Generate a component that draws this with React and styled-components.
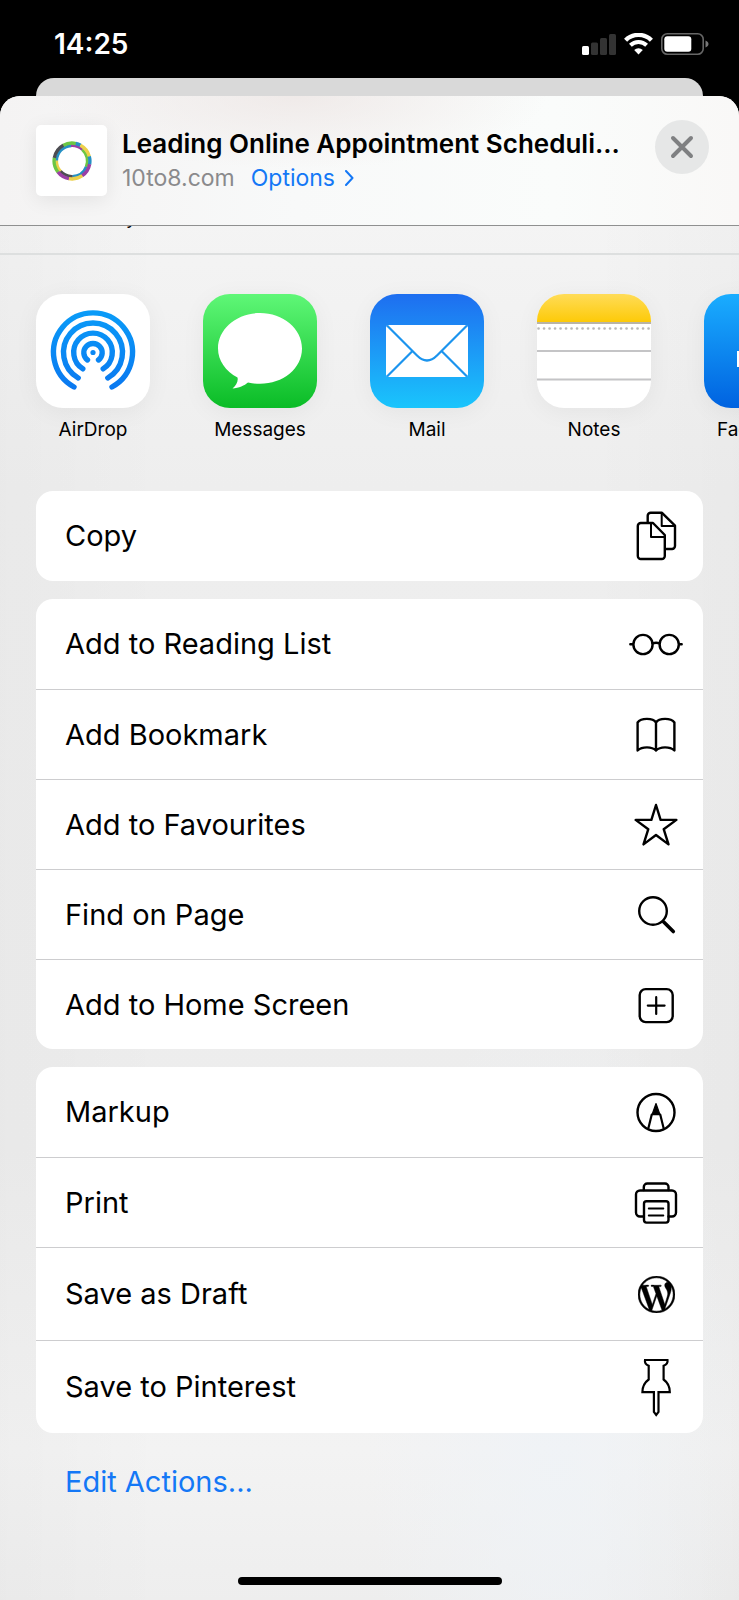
import React from 'react'
import styled, { createGlobalStyle } from 'styled-components'
import { SiWordpress } from 'react-icons/si'

const GlobalStyle = createGlobalStyle`
  * {
    box-sizing: border-box;
  }

  body {
    margin: 0;
    background: #000;
    color: #000;
    font-family: Inter, 'Liberation Sans', sans-serif;
  }

  button {
    appearance: none;
    border: none;
    margin: 0;
    padding: 0;
    background: none;
    color: inherit;
    font: inherit;
    cursor: pointer;
  }
`

const Screen = styled.div`
  display: flex;
  flex-direction: column;
  min-height: 100vh;
  overflow: hidden;
`

/**
 * Status bar
 */

const StatusBar = styled.div`
  display: flex;
  align-items: center;
  justify-content: space-between;
  height: 78px;
  padding: 10px 30px 0 54px;
  color: #fff;
`

const Time = styled.time`
  font-size: 28px;
  line-height: 32px;
  font-weight: 600;
`

const StatusIcons = styled.div`
  display: flex;
  align-items: center;
  gap: 8px;
`

const Signal = () => (
  <svg width="34" height="22" viewBox="0 0 34 22" aria-label="Signal">
    <rect x="0" y="13" width="7" height="9" rx="1.5" fill="#fff" />
    <rect x="9" y="9.5" width="7" height="12.5" rx="1.5" fill="#333" />
    <rect x="18" y="5" width="7" height="17" rx="1.5" fill="#333" />
    <rect x="27" y="1" width="7" height="21" rx="1.5" fill="#333" />
  </svg>
)

const Wifi = () => (
  <svg width="29" height="22" viewBox="0 0 29 22" fill="none" aria-label="Wi-Fi">
    <path d="M1.6 7.2a18.4 18.4 0 0 1 25.8 0" stroke="#fff" strokeWidth="4.4" />
    <path d="M6.4 12.2a11.6 11.6 0 0 1 16.2 0" stroke="#fff" strokeWidth="4" />
    <path d="M10.2 16.9a6.2 6.2 0 0 1 8.6 0L14.5 21.4z" fill="#fff" />
  </svg>
)

const Battery = () => (
  <svg width="48" height="22" viewBox="0 0 48 22" aria-label="Battery">
    <rect x="0.8" y="0.8" width="41.4" height="20.4" rx="5.5" fill="none" stroke="#666" strokeWidth="1.6" />
    <rect x="3.3" y="3.3" width="27" height="15.4" rx="3" fill="#fff" />
    <path d="M44.5 7.5c2 .8 3 2 3 3.500s-1 2.700-3 3.500z" fill="#777" />
  </svg>
)

/**
 * Sheet
 */

const BackSheet = styled.div`
  height: 38px;
  margin: 0 36px -20px;
  border-radius: 18px 18px 0 0;
  background: #d9d9d9;
`

const Sheet = styled.main`
  position: relative;
  flex: 1;
  display: flex;
  flex-direction: column;
  border-radius: 20px 20px 0 0;
  overflow: hidden;
  background:
    radial-gradient(ellipse at 75% 90%, rgba(239, 243, 247, 0.8), rgba(239, 243, 247, 0) 24%),
    linear-gradient(90deg, rgba(0, 0, 0, 0.02), transparent 22%, transparent 80%, rgba(0, 0, 0, 0.02)),
    linear-gradient(#f4f4f4 8%, #eeeeee 26%, #ededed 70%, #f3f3f3 90%, #eeeeee);
`

const Header = styled.header`
  display: flex;
  align-items: flex-start;
  padding: 24px 30px 29px 36px;
  border-bottom: 1px solid #8f9090;
  background:
    radial-gradient(ellipse at 40% 0, rgba(236, 228, 226, 0.7), rgba(236, 228, 226, 0) 40%),
    linear-gradient(90deg, #f4f3f3, #f8f9f9 40%, #fafcfb 75%, #f9f8f7);
`

const Thumb = styled.div`
  display: flex;
  align-items: center;
  justify-content: center;
  flex: none;
  width: 71px;
  height: 71px;
  margin: 5px 15px 0 0;
  border-radius: 5px;
  background: #fff;
  box-shadow: 0 4px 20px rgba(0, 0, 0, 0.08);
`

const HeaderText = styled.div`
  flex: 1;
  min-width: 0;
  padding-top: 7px;
`

const Title = styled.h1`
  margin: 0;
  font-size: 26px;
  line-height: 34px;
  font-weight: 600;
  white-space: nowrap;
`

const Subtitle = styled.div`
  display: flex;
  align-items: center;
  gap: 16px;
  font-size: 23px;
  line-height: 34px;
  color: #8a8a8c;
`

const OptionsButton = styled.button`
  display: flex;
  align-items: center;
  gap: 10px;
  color: #1478f6;
`

const CloseButton = styled.button`
  display: flex;
  align-items: center;
  justify-content: center;
  flex: none;
  width: 54px;
  height: 54px;
  border-radius: 50%;
  background: #e6e7e7;
`

// [start angle, end angle, colour], clockwise from the top
const outerRing = [
  [-30, 12, '#6cc644'],
  [12, 28, '#2590c4'],
  [28, 75, '#ecd04a'],
  [75, 100, '#2590c4'],
  [100, 145, '#9a3fa5'],
  [145, 190, '#ecd04a'],
  [190, 232, '#9a3fa5'],
  [232, 280, '#6cc644'],
  [280, 330, '#4d4d52'],
]

const innerRing = [
  [-5, 42, '#9a3fa5'],
  [42, 112, '#6cc644'],
  [112, 178, '#2590c4'],
  [178, 228, '#4d4d52'],
  [228, 272, '#ecd04a'],
  [272, 355, '#2590c4'],
]

const Ring = ({ radius, width, arcs }) =>
  arcs.map(([start, end, color]) => (
    <circle
      key={start}
      cx="20"
      cy="20"
      r={radius}
      fill="none"
      stroke={color}
      strokeWidth={width}
      pathLength="360"
      strokeDasharray={`${end - start + 1} 360`}
      transform={`rotate(${start - 90} 20 20)`}
    />
  ))

const Logo = () => (
  <svg width="40" height="40" viewBox="0 0 40 40" aria-hidden="true">
    <Ring radius={15.4} width={3} arcs={innerRing} />
    <Ring radius={17.9} width={3.4} arcs={outerRing} />
  </svg>
)

/**
 * People row, scrolled away under the header
 */

const People = styled.div`
  height: 29px;
  padding: 0 126px;
  border-bottom: 2px solid #dddfdf;
`

const PersonName = styled.div`
  display: flex;
  align-items: flex-end;
  height: 2px;
  overflow: hidden;
  font-size: 19px;
  line-height: 20px;
`

/**
 * Apps
 */

const Apps = styled.div`
  display: flex;
  gap: 53px;
  padding: 39px 0 0 36px;
  overflow: hidden;
`

const AppButton = styled.button`
  display: flex;
  flex-direction: column;
  align-items: center;
  flex: none;
  gap: 8px;
  width: 114px;
  font-size: 19px;
  line-height: 28px;
`

const AppTile = styled.span`
  display: block;
  width: 114px;
  height: 114px;
  border-radius: 27px;
  overflow: hidden;
  background: ${(props) => props.$background};
  box-shadow: 0 4px 24px rgba(0, 0, 0, 0.05);

  svg {
    display: block;
  }
`

const AirDropIcon = () => (
  <svg width="114" height="114" viewBox="0 0 114 114" fill="none">
    <defs>
      <linearGradient id="airdrop" gradientUnits="userSpaceOnUse" x1="0" y1="16" x2="0" y2="96">
        <stop offset="0" stopColor="#0a9cf8" />
        <stop offset="1" stopColor="#0a78f0" />
      </linearGradient>
    </defs>
    <g stroke="url(#airdrop)" strokeWidth="5.4" strokeLinecap="round">
      <path d="M38 93A39.500 39.500 0 1 1 76 93" />
      <path d="M42.200 84A29.500 29.500 0 1 1 71.800 84" />
      <path d="M46.800 74.800A19.300 19.300 0 1 1 67.200 74.800" />
      <path d="M51.500 66A9.200 9.200 0 1 1 62.500 66" />
    </g>
    <circle cx="57" cy="58.500" r="2.600" fill="#0a88f4" />
  </svg>
)

const MessagesIcon = () => (
  <svg width="114" height="114" viewBox="0 0 114 114">
    <path
      d="M57 19C34 19 15 34.500 15 54.500c0 12 7.500 22.500 19.500 29 1 4-1.500 8-5 11 6.500-.5 12-3 15.500-6 4 1 8 1.300 12 1.300 23 0 42-15.300 42-35.300S80 19 57 19z"
      fill="#fff"
    />
  </svg>
)

const MailIcon = () => (
  <svg width="114" height="114" viewBox="0 0 114 114">
    <rect x="16" y="31" width="82" height="52" rx="3" fill="#fff" />
    <g fill="none" stroke="#1b94ee" strokeWidth="2.2">
      <path d="M17 31.500L47 61.500c6.500 6.500 13.500 6.500 20 0L97 31.500" />
      <path d="M17 82.500L42.500 57M97 82.500L71.500 57" />
    </g>
  </svg>
)

const NotesIcon = () => (
  <svg width="114" height="114" viewBox="0 0 114 114">
    <defs>
      <linearGradient id="notes" x1="0" y1="0" x2="0" y2="1">
        <stop offset="0" stopColor="#ffdc58" />
        <stop offset="1" stopColor="#fdca08" />
      </linearGradient>
    </defs>
    <rect width="114" height="28" fill="url(#notes)" />
    <path d="M0 29h114" stroke="#b9b4a6" strokeWidth="2" />
    <path d="M1.500 34.500h114" stroke="#b8b8b8" strokeWidth="2.600" strokeLinecap="round" strokeDasharray="0.1 5.400" />
    <path d="M0 57h114M0 85.500h114" stroke="#c4c4c6" strokeWidth="2" />
  </svg>
)

const FacebookIcon = () => (
  <svg width="114" height="114" viewBox="0 0 114 114">
    <path d="M47 114V73H33V57h14V46c0-15 9-23 22-23 6 0 12 1 12 1v14h-7c-7 0-9 4-9 9v10h15l-2.500 16H65v41z" fill="#fff" />
  </svg>
)

const apps = [
  { name: 'AirDrop', icon: AirDropIcon, background: '#fff' },
  { name: 'Messages', icon: MessagesIcon, background: 'linear-gradient(#5ff777, #0abc26)' },
  { name: 'Mail', icon: MailIcon, background: 'linear-gradient(#1e6ef0, #1ac5fc)' },
  { name: 'Notes', icon: NotesIcon, background: '#fff' },
  { name: 'Facebook', icon: FacebookIcon, background: 'linear-gradient(#1aadff, #0062e0)' },
]

/**
 * Actions
 */

const Actions = styled.div`
  display: flex;
  flex-direction: column;
  gap: 18px;
  padding: 47px 36px 0;
`

const Group = styled.div`
  border-radius: 17px;
  overflow: hidden;
  background: #fff;
`

const ActionRow = styled.button`
  display: flex;
  align-items: center;
  justify-content: space-between;
  width: 100%;
  height: ${(props) => (props.$tall ? 93 : 90)}px;
  padding: 0 20px 0 29px;
  font-size: 29px;
  line-height: 36px;
  text-align: left;

  & + & {
    border-top: 1px solid #cdcdcf;
  }
`

const EditButton = styled.button`
  align-self: flex-start;
  margin: 31px 65px 0;
  font-size: 29px;
  line-height: 36px;
  color: #1478f6;
`

const HomeIndicator = styled.div`
  width: 264px;
  height: 8px;
  margin: auto auto 15px;
  border-radius: 4px;
  background: #000;
`

const Glyph = ({ children }) => (
  <svg
    width="54"
    height="60"
    viewBox="0 0 54 60"
    fill="none"
    stroke="#000"
    strokeWidth="2.400"
    strokeLinecap="round"
    strokeLinejoin="round"
    aria-hidden="true"
  >
    {children}
  </svg>
)

const CopyIcon = () => (
  <Glyph>
    <path d="M18.700 16.500V9.800a3 3 0 0 1 3-3H33L46 19.700V40a3 3 0 0 1-3 3H37.500" />
    <path d="M32.700 7.500V20H45.500" strokeWidth="2" />
    <path d="M11.800 17H24L35.800 29V50a3 3 0 0 1-3 3H11.800a3 3 0 0 1-3-3V20a3 3 0 0 1 3-3z" />
    <path d="M22 17.500V31H35.500" strokeWidth="2" />
  </Glyph>
)

const GlassesIcon = () => (
  <Glyph>
    <circle cx="14" cy="30.500" r="9.600" />
    <circle cx="40.200" cy="30.500" r="9.600" />
    <path d="M23.500 29.500q3.600-1.500 7.200 0M1.300 30.200H4M50.200 30.200H52.700" />
  </Glyph>
)

const BookIcon = () => (
  <Glyph>
    <path d="M27 17.500C24 12.700 12 12.700 8.600 17.500V45.500C13 41.300 23 41.300 27 45.500C31 41.300 41 41.300 45.400 45.500V17.500C42 12.700 30 12.700 27 17.500zV45.500" />
  </Glyph>
)

const StarIcon = () => (
  <Glyph>
    <path d="M27 10L31.600 24.900H47.400L34.700 34.200L39.500 49.400L27 40L14.500 49.400L19.300 34.200L6.600 24.900H22.400z" />
  </Glyph>
)

const SearchIcon = () => (
  <Glyph>
    <circle cx="24" cy="26" r="13.800" />
    <path d="M34.500 36.800L44.300 46.600" strokeWidth="3.600" />
  </Glyph>
)

const PlusIcon = () => (
  <Glyph>
    <rect x="10.700" y="14.100" width="33" height="33" rx="6" />
    <path d="M18.800 30.600H35.600M27.200 22.200V39" strokeWidth="2.200" />
  </Glyph>
)

const MarkupIcon = () => (
  <Glyph>
    <circle cx="27" cy="30.500" r="18.500" />
    <path d="M22.700 32.700L19.300 46.600M31.300 32.700L34.700 46.600" strokeWidth="2.200" />
    <path d="M27 21.500L23 32.700H31z" fill="#000" strokeWidth="1.200" />
  </Glyph>
)

const PrintIcon = () => (
  <Glyph>
    <path d="M14.800 17V14a3.500 3.500 0 0 1 3.500-3.500H36a3.500 3.500 0 0 1 3.500 3.500V17" />
    <path d="M14.500 43.500H11a4 4 0 0 1-4-4V21.500a4 4 0 0 1 4-4H43a4 4 0 0 1 4 4V39.500a4 4 0 0 1-4 4H39.500" />
    <rect x="15" y="28.300" width="24.500" height="21.300" rx="2.500" />
    <path d="M19.800 35.500H34.300M19.800 42.500H34.300" strokeWidth="2" />
  </Glyph>
)

const WordpressSlot = styled.span`
  display: flex;
  justify-content: center;
  width: 54px;
`

const WordpressIcon = () => (
  <WordpressSlot>
    <SiWordpress size={37} stroke="currentColor" strokeWidth="0.3" aria-hidden="true" />
  </WordpressSlot>
)

const PinIcon = () => (
  <Glyph>
    <path
      d="M16 3H38.500C39 6 37.500 7.600 34.600 8.800V22.500C38 25 40.800 29 40.800 35.200H29.500V55L27.200 58L24.900 55V35.200H13.400C13.400 29 16.200 25 19.700 22.500V8.800C16.800 7.600 15.500 6 16 3z"
      strokeWidth="2.200"
      strokeLinejoin="miter"
    />
  </Glyph>
)

const groups = [
  [{ label: 'Copy', icon: CopyIcon }],
  [
    { label: 'Add to Reading List', icon: GlassesIcon },
    { label: 'Add Bookmark', icon: BookIcon },
    { label: 'Add to Favourites', icon: StarIcon },
    { label: 'Find on Page', icon: SearchIcon },
    { label: 'Add to Home Screen', icon: PlusIcon },
  ],
  [
    { label: 'Markup', icon: MarkupIcon },
    { label: 'Print', icon: PrintIcon },
    { label: 'Save as Draft', icon: WordpressIcon, tall: true },
    { label: 'Save to Pinterest', icon: PinIcon, tall: true },
  ],
]

const App = () => (
  <Screen>
    <GlobalStyle />
    <StatusBar>
      <Time>14:25</Time>
      <StatusIcons>
        <Signal />
        <Wifi />
        <Battery />
      </StatusIcons>
    </StatusBar>
    <BackSheet />
    <Sheet>
      <Header>
        <Thumb>
          <Logo />
        </Thumb>
        <HeaderText>
          <Title>Leading Online Appointment Scheduli...</Title>
          <Subtitle>
            10to8.com
            <OptionsButton>
              Options
              <svg width="9" height="16" viewBox="0 0 9 16" fill="none" stroke="currentColor" strokeWidth="2">
                <path d="M1 1l6.500 7L1 15" strokeLinecap="round" strokeLinejoin="round" />
              </svg>
            </OptionsButton>
          </Subtitle>
        </HeaderText>
        <CloseButton aria-label="Close">
          <svg width="24" height="24" viewBox="0 0 24 24" stroke="#7f8082" strokeWidth="4" strokeLinecap="round">
            <path d="M3 3l18 18M21 3L3 21" />
          </svg>
        </CloseButton>
      </Header>
      <People>
        <PersonName>y</PersonName>
      </People>
      <Apps>
        {apps.map(({ name, icon: Icon, background }) => (
          <AppButton key={name}>
            <AppTile $background={background}>
              <Icon />
            </AppTile>
            {name}
          </AppButton>
        ))}
      </Apps>
      <Actions>
        {groups.map((actions) => (
          <Group key={actions[0].label}>
            {actions.map(({ label, icon: Icon, tall }) => (
              <ActionRow key={label} $tall={tall}>
                {label}
                <Icon />
              </ActionRow>
            ))}
          </Group>
        ))}
      </Actions>
      <EditButton>Edit Actions...</EditButton>
      <HomeIndicator />
    </Sheet>
  </Screen>
)

export default App
